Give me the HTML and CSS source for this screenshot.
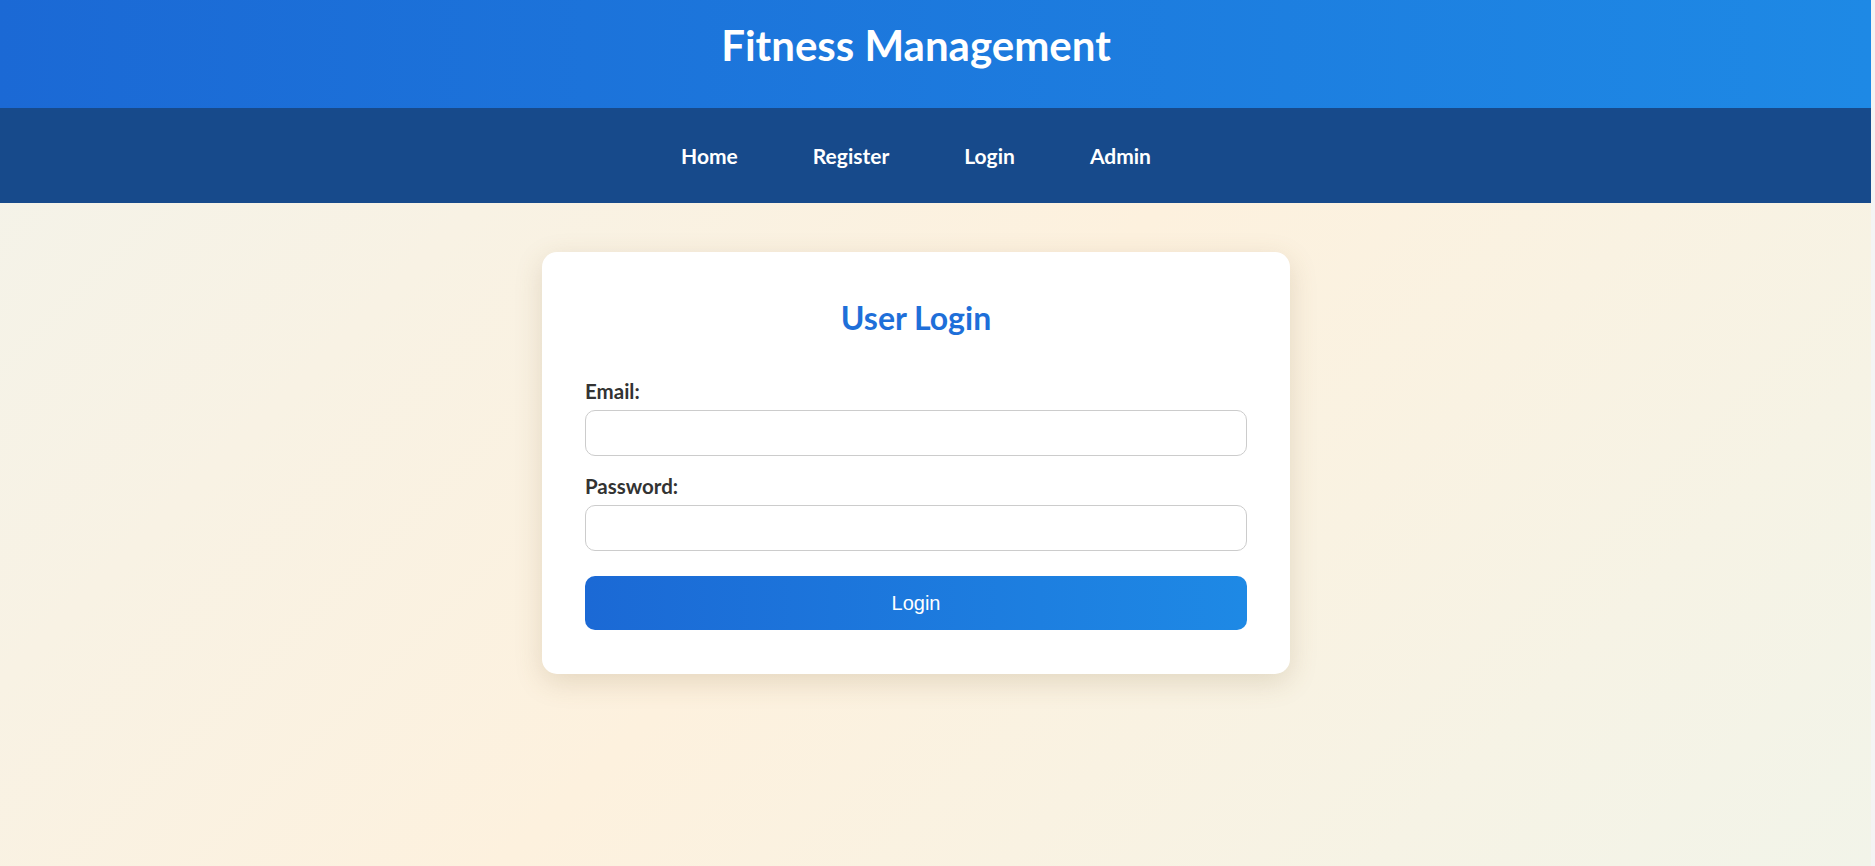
FILE: index.html
```html
<!DOCTYPE html>
<html lang="en">
<head>
<meta charset="utf-8">
<title>Fitness Management - Login</title>
<link rel="stylesheet" href="styles.css">
</head>
<body>
<header class="site-header">
  <h1 class="site-title">Fitness Management</h1>
</header>
<nav class="site-nav">
  <ul class="nav-list">
    <li><a class="nav-link" href="#">Home</a></li>
    <li><a class="nav-link" href="#">Register</a></li>
    <li><a class="nav-link" href="#">Login</a></li>
    <li><a class="nav-link" href="#">Admin</a></li>
  </ul>
</nav>
<main class="main">
  <section class="card">
    <h2 class="card-title">User Login</h2>
    <form class="form">
      <label class="label" for="email">Email:</label>
      <input class="input" id="email" type="email">
      <label class="label label-second" for="password">Password:</label>
      <input class="input" id="password" type="password">
      <button class="btn" type="button">Login</button>
    </form>
  </section>
</main>
</body>
</html>
```
FILE: styles.css
```css
html {
  background: #f4f4f4;
}
body {
  margin: 0 4px 0 0;
  min-height: 100vh;
  font-family: Lato, "Open Sans", sans-serif;
  background: linear-gradient(135deg, #f3f3ea 0%, #fdf1de 50%, #f2f4e9 100%);
}
.site-header {
  height: 108px;
  box-sizing: border-box;
  padding: 20px 39px 0 0;
  background: linear-gradient(90deg, #1b69d5 0%, #1e89e5 100%);
  color: #fff;
  text-align: center;
}
.site-title {
  margin: 0;
  font-size: 42px;
  line-height: 50px;
  font-weight: 700;
}
.site-nav {
  height: 95px;
  box-sizing: border-box;
  padding-top: 35px;
  background: #174a8b;
}
.nav-list {
  list-style: none;
  margin: 0;
  padding: 0 39px 0 0;
  display: flex;
  justify-content: center;
  gap: 75px;
}
.nav-link {
  color: #fff;
  text-decoration: none;
  font-weight: 700;
  font-size: 21px;
  line-height: 25px;
  display: block;
}
.main {
  padding: 49px 39px 40px 0;
  display: flex;
  justify-content: center;
}
.card {
  width: 748px;
  box-sizing: border-box;
  padding: 47px 43px 44px;
  background: #fff;
  border-radius: 15px;
  box-shadow: 0 8px 28px rgba(120, 95, 50, 0.18);
}
.card-title {
  margin: 0 0 42px;
  text-align: center;
  color: #1e6fd9;
  font-size: 32px;
  line-height: 38px;
  font-weight: 700;
}
.form {
  display: flex;
  flex-direction: column;
}
.label {
  display: block;
  font-size: 20.5px;
  line-height: 24px;
  font-weight: 700;
  color: #333;
  margin-bottom: 7px;
}
.label-second {
  margin-top: 18px;
}
.input {
  height: 46px;
  box-sizing: border-box;
  border: 1px solid #cccccc;
  border-radius: 10px;
  padding: 0 12px;
  font-size: 16px;
  background: #fff;
  margin: 0;
}
.btn {
  margin-top: 25px;
  height: 54px;
  border: none;
  border-radius: 10px;
  background: linear-gradient(90deg, #1b69d5 0%, #1e89e5 100%);
  color: #fff;
  font-family: "Liberation Sans", Arial, sans-serif;
  font-size: 20px;
  cursor: pointer;
}
```
